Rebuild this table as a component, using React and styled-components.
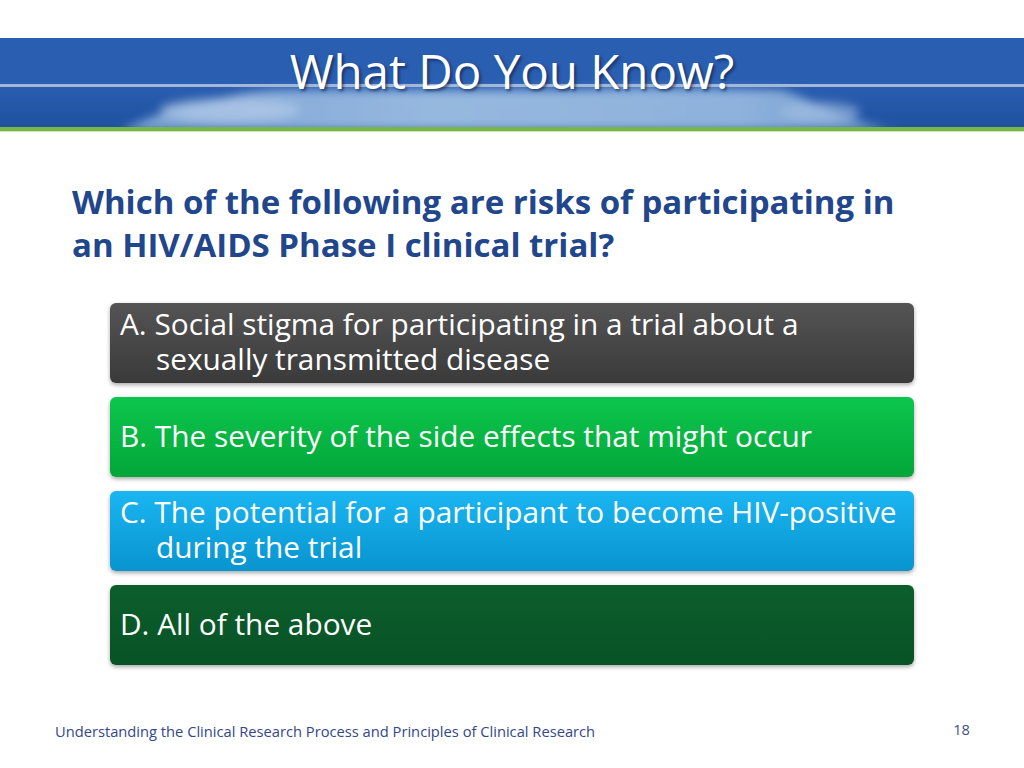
import React from 'react';
import styled, { createGlobalStyle } from 'styled-components';

const GlobalStyle = createGlobalStyle`
    html, body {
        margin: 0;
        padding: 0;
        background: #ffffff;
    }
    body {
        font-family: "Open Sans", Lato, sans-serif;
    }
`;

const Slide = styled.div`
    width: 1024px;
    height: 768px;
    overflow: hidden;
    background: #ffffff;
    display: flex;
    flex-direction: column;
`;

const Banner = styled.header`
    position: relative;
    margin-top: 38px;
    height: 89px;
    background: #2a5eb1;
    overflow: hidden;
    display: flex;
    justify-content: center;
`;

const BannerArt = styled.svg`
    position: absolute;
    inset: 0;
    width: 100%;
    height: 100%;
`;

const Title = styled.h1`
    position: relative;
    margin: 0;
    padding-top: 8px;
    font-family: "Open Sans", Lato, sans-serif;
    font-weight: 400;
    font-size: 47.5px;
    line-height: 50px;
    color: #ffffff;
    text-shadow: 2px 2px 3px rgba(10, 25, 60, 0.6);
`;

const GreenRule = styled.div`
    height: 4px;
    background: #78b648;
    border-bottom: 1px solid #cfe6b6;
`;

const Question = styled.h2`
    margin: 48px 0 0 72px;
    font-family: "Open Sans", Lato, sans-serif;
    font-weight: 700;
    font-size: 33px;
    line-height: 43px;
    color: #22468c;
    width: 835px;
`;

const Options = styled.div`
    margin: 37px 0 0 110px;
    width: 804px;
    display: flex;
    flex-direction: column;
    gap: 14px;
`;

const tones = {
    gray: 'linear-gradient(#545454, #3a3a3a)',
    green: 'linear-gradient(#0cc64c, #03a63a)',
    blue: 'linear-gradient(#1ab6f2, #0894cf)',
    forest: 'linear-gradient(#0c5e2c, #085226)',
};

const Option = styled.div`
    height: 80px;
    display: flex;
    align-items: center;
    box-sizing: border-box;
    padding: 0 10px 4px 46px;
    border-radius: 6px;
    background: ${({ tone }) => tones[tone]};
    box-shadow: 0 2px 4px rgba(0, 0, 0, 0.35);
    color: #ffffff;
    font-size: 29.8px;
    line-height: 35px;
`;

const OptionText = styled.p`
    margin: 0;
    text-indent: -36px;
`;

const Footer = styled.footer`
    margin-top: 55px;
    display: flex;
    justify-content: space-between;
    align-items: flex-end;
    padding: 0 54px 0 55px;
`;

const FooterText = styled.span`
    font-size: 14.7px;
    line-height: 19px;
    color: #33478a;
`;

const PageNumber = styled.span`
    font-size: 14.7px;
    line-height: 19px;
    padding-bottom: 2px;
    color: #3e5086;
`;

const answers = [
    { tone: 'gray', text: 'A. Social stigma for participating in a trial about a sexually transmitted disease' },
    { tone: 'green', text: 'B. The severity of the side effects that might occur' },
    { tone: 'blue', text: 'C. The potential for a participant to become HIV-positive during the trial' },
    { tone: 'forest', text: 'D. All of the above' },
];

const Sky = () => (
    <BannerArt viewBox="0 0 1024 89" preserveAspectRatio="none">
        <defs>
            <filter id="soft" x="-20%" y="-50%" width="140%" height="200%">
                <feGaussianBlur stdDeviation="5" />
            </filter>
            <linearGradient id="low" x1="0" y1="0" x2="0" y2="1">
                <stop offset="0" stopColor="#2a5db0" />
                <stop offset="1" stopColor="#1f51a0" />
            </linearGradient>
            <linearGradient id="cloud" x1="0" y1="0" x2="1" y2="0">
                <stop offset="0" stopColor="#7fa6d6" />
                <stop offset="0.4" stopColor="#9cbde2" />
                <stop offset="0.8" stopColor="#93b6de" />
                <stop offset="1" stopColor="#6f98cc" />
            </linearGradient>
        </defs>
        <rect x="0" y="0" width="1024" height="47" fill="#2a5eb1" />
        <rect x="0" y="49" width="1024" height="40" fill="url(#low)" />
        <g filter="url(#soft)">
            <path
                d="M120 92 C150 80 170 70 200 66 C230 58 250 52 285 52 L560 52 C600 52 620 50 640 50 L780 52 C810 60 820 70 850 80 C870 86 880 90 900 92 Z"
                fill="url(#cloud)"
                opacity="0.95"
            />
            <ellipse cx="230" cy="72" rx="70" ry="12" fill="#b3cbe8" opacity="0.7" />
            <ellipse cx="820" cy="74" rx="40" ry="10" fill="#a6c2e4" opacity="0.6" />
        </g>
        <rect x="0" y="46" width="1024" height="3" fill="#a3b8d8" />
    </BannerArt>
);

export default function App() {
    return (
        <Slide>
            <GlobalStyle />
            <Banner>
                <Sky />
                <Title>What Do You Know?</Title>
            </Banner>
            <GreenRule />
            <Question>
                Which of the following are risks of participating in an HIV/AIDS Phase I clinical trial?
            </Question>
            <Options>
                {answers.map(answer => (
                    <Option key={answer.text} tone={answer.tone}>
                        <OptionText>{answer.text}</OptionText>
                    </Option>
                ))}
            </Options>
            <Footer>
                <FooterText>
                    Understanding the Clinical Research Process and Principles of Clinical Research
                </FooterText>
                <PageNumber>18</PageNumber>
            </Footer>
        </Slide>
    );
}
